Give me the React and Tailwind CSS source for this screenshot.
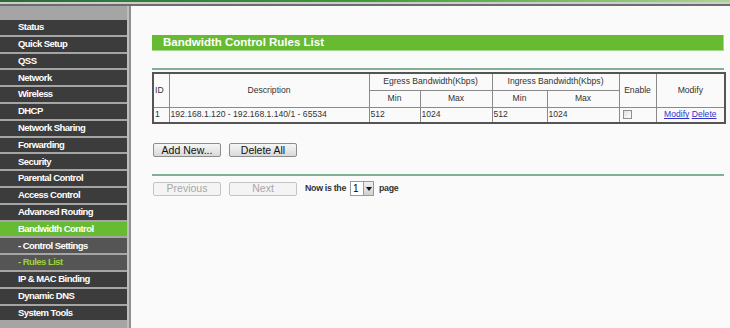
import React from 'react'

const menu = [
  { name: 'Status' },
  { name: 'Quick Setup' },
  { name: 'QSS' },
  { name: 'Network' },
  { name: 'Wireless' },
  { name: 'DHCP' },
  { name: 'Network Sharing' },
  { name: 'Forwarding' },
  { name: 'Security' },
  { name: 'Parental Control' },
  { name: 'Access Control' },
  { name: 'Advanced Routing' },
  { name: 'Bandwidth Control', kind: 'active' },
  { name: '- Control Settings', kind: 'sub' },
  { name: '- Rules List', kind: 'subActive' },
  { name: 'IP & MAC Binding' },
  { name: 'Dynamic DNS' },
  { name: 'System Tools' },
]

const itemClass = {
  active: 'bg-[#66bb33] text-white',
  sub: 'bg-[#555555] text-white',
  subActive: 'bg-[#555555] text-[#9fd23c]',
}

const cell = 'border border-[#8a8a8a] px-[1px] font-normal'

function Button({ children, disabled }) {
  return (
    <button
      className={`h-[14px] w-[68px] rounded-[2px] border text-[10.5px] leading-none ${
        disabled
          ? 'border-[#c4c4c4] bg-[#f4f4f4] text-[#a8a8a8]'
          : 'border-[#8c8c8c] bg-gradient-to-b from-[#f6f6f6] to-[#d9d9d9] text-[#111]'
      }`}
    >
      {children}
    </button>
  )
}

export default function App() {
  return (
    <div className="w-[730px] h-[328px] overflow-hidden flex flex-col bg-[#fafafa] font-['Liberation_Sans',Arial,sans-serif]">
      {/* top stripes */}
      <div className="h-[2px] bg-gradient-to-r from-[#2c6a38] via-[#3f9a3a] to-[#a8d890]" />
      <div className="h-[2px] bg-[#cdcdcd]" />
      <div className="h-[2px] bg-[#6d6d6d]" />

      <div className="flex flex-1 min-h-0">
        {/* Sidebar */}
        <div className="w-[127px] shrink-0 flex flex-col bg-[#a5a5a5]">
          <div className="h-[12px] shrink-0" />
          {menu.map((item) => (
            <div
              key={item.name}
              className={`h-[16.8px] shrink-0 box-border border-t-2 border-[#a5a5a5] flex items-center pl-[18px] text-[9.5px] font-bold tracking-[-0.55px] ${
                itemClass[item.kind] || 'bg-[#3c3c3c] text-white'
              }`}
            >
              {item.name}
            </div>
          ))}
        </div>
        <div className="w-[2px] shrink-0 bg-[#bdbdbd]" />
        <div className="w-[2px] shrink-0 bg-[#8f8f8f]" />

        {/* Main content */}
        <main className="flex-1 min-w-0 pl-[21px] text-[#333]">
          <div className="mt-[29px] w-[572px] h-[16px] bg-[#66bb33] border-b border-r border-[#a3d98a] flex items-center pl-[11px] text-white font-bold text-[11.5px]">
            Bandwidth Control Rules List
          </div>

          <div className="mt-[17px] w-[572px] h-[2px] bg-[#80b096]" />

          <table className="mt-[2px] w-[572px] border-collapse border-2 border-[#555] text-[8.6px] leading-none table-fixed">
            <colgroup>
              <col className="w-[16px]" />
              <col className="w-[200px]" />
              <col className="w-[51px]" />
              <col className="w-[72px]" />
              <col className="w-[55px]" />
              <col className="w-[72px]" />
              <col className="w-[37px]" />
              <col className="w-[69px]" />
            </colgroup>
            <thead>
              <tr className="h-[17px]">
                <th rowSpan={2} className={`${cell} text-left`}>ID</th>
                <th rowSpan={2} className={`${cell} text-center`}>Description</th>
                <th colSpan={2} className={`${cell} text-center`}>Egress Bandwidth(Kbps)</th>
                <th colSpan={2} className={`${cell} text-center`}>Ingress Bandwidth(Kbps)</th>
                <th rowSpan={2} className={`${cell} text-center`}>Enable</th>
                <th rowSpan={2} className={`${cell} text-center`}>Modify</th>
              </tr>
              <tr className="h-[17px]">
                <th className={`${cell} text-center`}>Min</th>
                <th className={`${cell} text-center`}>Max</th>
                <th className={`${cell} text-center`}>Min</th>
                <th className={`${cell} text-center`}>Max</th>
              </tr>
            </thead>
            <tbody>
              <tr className="h-[16px]">
                <td className={cell}>1</td>
                <td className={cell}>192.168.1.120 - 192.168.1.140/1 - 65534</td>
                <td className={cell}>512</td>
                <td className={cell}>1024</td>
                <td className={cell}>512</td>
                <td className={cell}>1024</td>
                <td className={`${cell} pl-[3px]`}>
                  <div className="w-[9px] h-[9px] border border-[#8f8f8f] bg-gradient-to-br from-[#e0e0e0] to-[#fdfdfd]" />
                </td>
                <td className={`${cell} text-center`}>
                  <a className="text-[#3333cc] underline">Modify</a>{' '}
                  <a className="text-[#3333cc] underline">Delete</a>
                </td>
              </tr>
            </tbody>
          </table>

          <div className="mt-[19px] flex gap-[8px] pl-[1px]">
            <Button>Add New...</Button>
            <Button>Delete All</Button>
          </div>

          <div className="mt-[17px] w-[572px] h-[2px] bg-[#80b096]" />

          <div className="mt-[5px] flex items-center pl-[1px]">
            <Button disabled>Previous</Button>
            <div className="w-[8px]" />
            <Button disabled>Next</Button>
            <span className="ml-[8px] text-[8.8px] tracking-[-0.3px] text-[#333] font-bold">Now is the</span>
            <div className="ml-[4px] h-[15px] w-[24px] flex border border-[#9a9a9a] bg-white">
              <span className="flex-1 text-[10px] text-black pl-[2px] leading-[13px]">1</span>
              <span className="w-[10px] border-l border-[#9a9a9a] bg-gradient-to-b from-[#f0f0f0] to-[#d0d0d0] flex items-center justify-center">
                <svg width="6" height="4" viewBox="0 0 6 4"><path d="M0 0h6L3 4z" fill="#111" /></svg>
              </span>
            </div>
            <span className="ml-[5px] text-[8.8px] tracking-[-0.3px] text-[#333] font-bold">page</span>
          </div>
        </main>
      </div>
    </div>
  )
}
